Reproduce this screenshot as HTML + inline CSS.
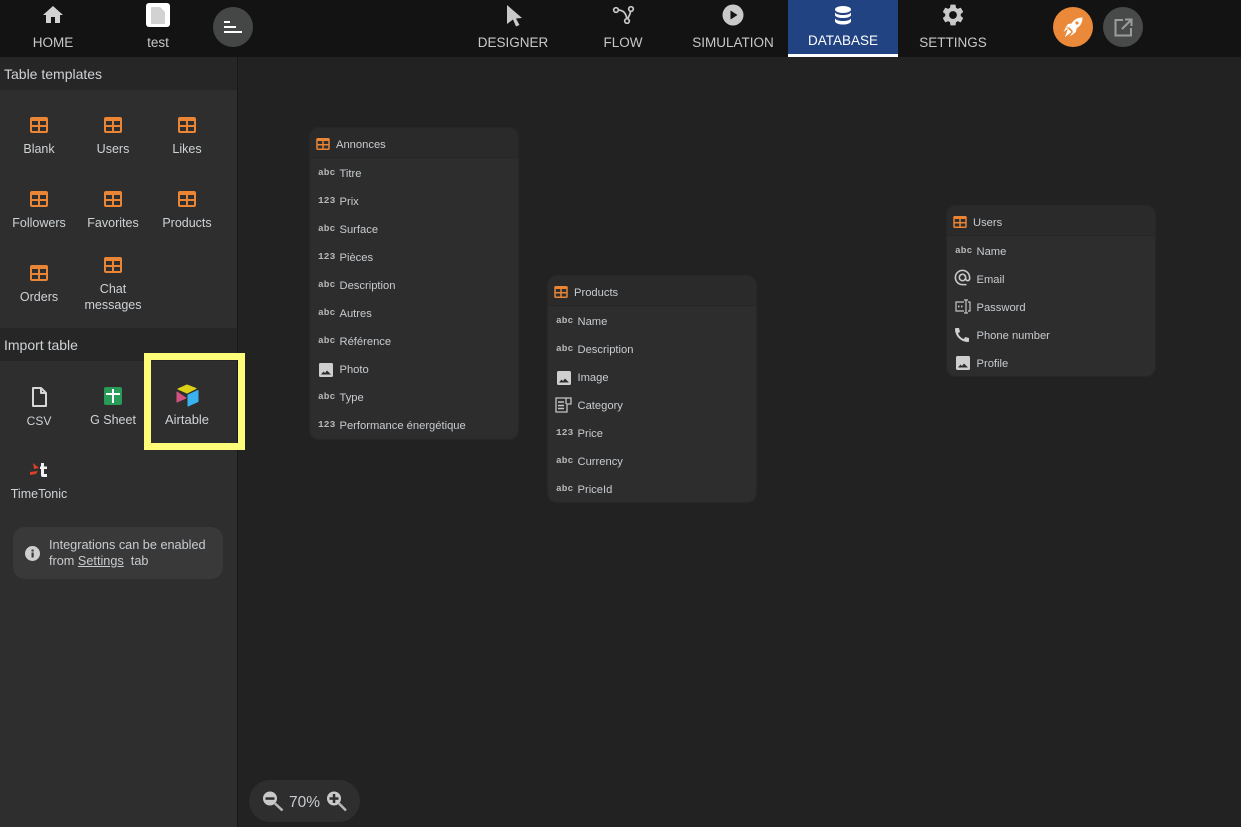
<!DOCTYPE html>
<html><head><meta charset="utf-8">
<style>
html,body{margin:0;padding:0;width:1241px;height:827px;overflow:hidden;background:#222;font-family:"Liberation Sans",sans-serif;color:#d0d0d0}
div,span,svg{position:absolute;box-sizing:border-box}
a,u{position:static}
.t{white-space:nowrap;text-align:center;transform:translateX(-50%);line-height:16px}
.nav{font-size:13.5px;color:#c8c8c8;top:35px}
.lab{font-size:12.5px;color:#cfd3d6}
.hd{left:0;width:237px;background:#262626;font-size:14px;color:#cfd3d6;padding-left:4px}
.tb{background:#2d2d2d;border-radius:10px;width:210px}
.tb:after{content:"";position:absolute;left:0;top:0;right:0;bottom:0;border:1px solid #272727;border-radius:10px}
.th{left:0;top:0;width:100%;height:31px;background:#2a2a2a;border-bottom:1px solid #252525;border-radius:10px 10px 0 0}
.tn{left:27px;top:11px;font-size:11.2px;line-height:14px;color:#c8ccd0;white-space:nowrap}
.rn{left:30.5px;font-size:11.2px;line-height:14px;color:#c8ccd0;white-space:nowrap;margin-top:1px}
.ic{left:9px;width:17px;font-family:"Liberation Mono",monospace;font-size:9.5px;font-weight:bold;line-height:14px;color:#b8b8b8;letter-spacing:.1px;white-space:nowrap;margin-top:0}
</style></head><body>
<svg width="0" height="0" style="left:0;top:0"><defs>
<symbol id="tbl" viewBox="0 0 18 16"><rect width="18" height="16" rx="2" fill="#e98535"/><rect x="2" y="4" width="6" height="4" fill="#2e2e2e"/><rect x="10" y="4" width="6" height="4" fill="#2e2e2e"/><rect x="2" y="10" width="6" height="4" fill="#2e2e2e"/><rect x="10" y="10" width="6" height="4" fill="#2e2e2e"/></symbol>
<symbol id="img" viewBox="0 0 14 14"><rect width="14" height="14" rx="1.5" fill="#cfcfcf"/><path d="M2 11.500l2.500-3 1.500 1.500L8 7.500l4 4z" fill="#2d2d2d"/></symbol>
</defs></svg>

<!-- top bar -->
<div style="left:0;top:0;width:1241px;height:57px;background:#131313"></div>
<svg style="left:41px;top:3px" width="24" height="24" viewBox="0 0 24 24"><path d="M10 20v-6h4v6h5v-8h3L12 3 2 12h3v8z" fill="#d2d2d2"/></svg>
<div class="t nav" style="left:53px">HOME</div>
<div style="left:146px;top:3px;width:24px;height:24px;background:#fff;border-radius:3px"></div>
<svg style="left:151px;top:7px" width="14" height="17" viewBox="0 0 14 17"><path d="M1 0h8l5 5v11a1 1 0 0 1-1 1H1a1 1 0 0 1-1-1V1a1 1 0 0 1 1-1z" fill="#d2d2d2"/></svg>
<div class="t nav" style="left:158px">test</div>
<div style="left:213px;top:7px;width:40px;height:40px;border-radius:50%;background:#454746"></div>
<svg style="left:224px;top:21px" width="18" height="12"><rect width="6" height="2" fill="#fff"/><rect y="5" width="12" height="2" fill="#fff"/><rect y="10" width="18" height="2" fill="#fff"/></svg>

<div style="left:788px;top:0;width:110px;height:57px;background:#224382;border-bottom:3px solid #fff"></div>
<svg style="left:505px;top:4px" width="18" height="23" viewBox="0 0 18 23"><path d="M2 1l15 13-6 .5 3.500 6.500-3.500 1.500-3-7-6 4.500z" fill="#c9c9c9"/></svg>
<div class="t nav" style="left:513px">DESIGNER</div>
<svg style="left:612px;top:4px" width="24" height="20" viewBox="0 0 24 20" fill="none" stroke="#c9c9c9" stroke-width="1.700"><circle cx="4" cy="6" r="2.300"/><circle cx="19" cy="5" r="2.300"/><circle cx="15" cy="17" r="2.300"/><path d="M6.300 6c5 .5 7.500 2.500 8.500 8.700M18.500 7.300c-.2 3-1.500 5-3 7.500"/></svg>
<div class="t nav" style="left:623px">FLOW</div>
<svg style="left:722px;top:4px" width="22" height="22" viewBox="0 0 22 22"><circle cx="11" cy="11" r="10.500" fill="#c9c9c9"/><path d="M8.500 6.500l7 4.500-7 4.500z" fill="#131313"/></svg>
<div class="t nav" style="left:733px">SIMULATION</div>
<svg style="left:834px;top:6px" width="18" height="19" viewBox="0 0 18 19" fill="#fff"><ellipse cx="9" cy="3.500" rx="8" ry="3.500"/><path d="M1 6.500c1 1.500 4 2.500 8 2.500s7-1 8-2.500v3c-1 1.500-4 2.500-8 2.500s-7-1-8-2.500z"/><path d="M1 12.500c1 1.500 4 2.500 8 2.500s7-1 8-2.500v3c-1 2-4 3-8 3s-7-1-8-3z"/></svg>
<div class="t nav" style="left:843px;top:33px;color:#fff">DATABASE</div>
<svg style="left:940px;top:2px" width="26" height="26" viewBox="0 0 24 24"><path fill="#c9c9c9" d="M19.140 12.940c.04-.3.06-.61.06-.94 0-.32-.02-.64-.07-.94l2.030-1.580c.18-.14.23-.41.12-.61l-1.920-3.320c-.12-.22-.37-.29-.59-.22l-2.390.96c-.5-.38-1.030-.7-1.620-.94l-.36-2.540c-.04-.24-.24-.41-.48-.41h-3.840c-.24 0-.43.17-.47.41l-.36 2.540c-.59.24-1.130.57-1.620.94l-2.390-.96c-.22-.08-.47 0-.59.22L2.740 8.870c-.12.21-.08.47.12.61l2.030 1.580c-.05.3-.09.63-.09.94s.02.64.07.94l-2.030 1.580c-.18.14-.23.41-.12.61l1.920 3.320c.12.22.37.29.59.22l2.390-.96c.5.38 1.030.7 1.620.94l.36 2.540c.05.24.24.41.48.41h3.840c.24 0 .44-.17.47-.41l.36-2.540c.59-.24 1.130-.56 1.620-.94l2.390.96c.22.08.47 0 .59-.22l1.920-3.320c.12-.22.07-.47-.12-.61l-2.010-1.580zM12 15.600c-1.980 0-3.600-1.620-3.600-3.600s1.620-3.600 3.600-3.600 3.600 1.620 3.600 3.600-1.620 3.600-3.600 3.600z"/></svg>
<div class="t nav" style="left:953px">SETTINGS</div>
<div style="left:1053px;top:7px;width:40px;height:40px;border-radius:50%;background:#e98939"></div>
<svg style="left:1063px;top:17px" width="20" height="20" viewBox="0 0 20 20" fill="#fff"><path d="M19.500.5c-5 0-8.500 2-11 6l-3.500.5-2 3 3.500.5 3 3 .5 3.500 3-2 .5-3.500c4-2.500 6-6 6-11z"/><circle cx="14" cy="6" r="1.600" fill="#e98939"/><path d="M5 11.500l3.500 3.500-6.500 5zM3 10l2 1.500L.5 15zM9.500 15.500l1 1.500-4 2.500z"/></svg>
<div style="left:1103px;top:7px;width:40px;height:40px;border-radius:50%;background:#484a49"></div>
<svg style="left:1114px;top:18px" width="19" height="19" viewBox="0 0 19 19" fill="none" stroke="#9c9c9c" stroke-width="2"><path d="M9 2H1.500v15.500H17V10M11 1.500h6.500V8M17 2L8 11"/></svg>

<!-- sidebar -->
<div style="left:0;top:57px;width:237px;height:770px;background:#2e2e2e"></div>
<div style="left:237px;top:57px;width:1px;height:770px;background:#171717"></div>
<div class="hd" style="top:57px;height:33px;line-height:35px">Table templates</div>
<div class="hd" style="top:328px;height:33px;line-height:35px">Import table</div>

<svg style="left:30px;top:117px" width="18" height="16"><use href="#tbl"/></svg><div class="t lab" style="left:39px;top:141px">Blank</div>
<svg style="left:104px;top:117px" width="18" height="16"><use href="#tbl"/></svg><div class="t lab" style="left:113px;top:141px">Users</div>
<svg style="left:178px;top:117px" width="18" height="16"><use href="#tbl"/></svg><div class="t lab" style="left:187px;top:141px">Likes</div>
<svg style="left:30px;top:191px" width="18" height="16"><use href="#tbl"/></svg><div class="t lab" style="left:39px;top:215px">Followers</div>
<svg style="left:104px;top:191px" width="18" height="16"><use href="#tbl"/></svg><div class="t lab" style="left:113px;top:215px">Favorites</div>
<svg style="left:178px;top:191px" width="18" height="16"><use href="#tbl"/></svg><div class="t lab" style="left:187px;top:215px">Products</div>
<svg style="left:30px;top:265px" width="18" height="16"><use href="#tbl"/></svg><div class="t lab" style="left:39px;top:289px">Orders</div>
<svg style="left:104px;top:257px" width="18" height="16"><use href="#tbl"/></svg><div class="t lab" style="left:113px;top:281px">Chat<br>messages</div>

<svg style="left:31px;top:387px" width="16" height="20" viewBox="0 0 16 20" fill="none" stroke="#d6d6d6" stroke-width="2" stroke-linejoin="round"><path d="M2 1h8l5 5v13H2zM10 1v5h5"/></svg>
<div class="t lab" style="left:39px;top:413px;font-size:12px">CSV</div>
<div style="left:104px;top:387px;width:18px;height:18px;background:#2a9a58;border-radius:2px"></div>
<svg style="left:104px;top:387px" width="18" height="18"><rect x="2" y="6" width="14" height="2" fill="#fff"/><rect x="8" y="2" width="2" height="14" fill="#fff"/></svg>
<div class="t lab" style="left:113px;top:412px">G Sheet</div>
<div style="left:144px;top:353px;width:101px;height:97px;border:7px solid #fdfd79"></div>
<svg style="left:176px;top:384px" width="24" height="24" viewBox="0 0 24 24" stroke-linejoin="round"><path d="M11 1l9 3.500-9 4.500-9-4z" fill="#dcd318" stroke="#dcd318"/><path d="M12 11l10-4.500v11L12 22z" fill="#39b2f2" stroke="#39b2f2"/><path d="M1 8l9 6-9 4z" fill="#d2527f" stroke="#d2527f"/></svg>
<div class="t lab" style="left:187px;top:412px;font-size:13px">Airtable</div>
<svg style="left:29px;top:462px" width="20" height="16" viewBox="0 0 20 16"><path d="M4 1l6 5-5 1zM1 10l8-1-2 3-6 1z" fill="#d9402b"/><path d="M12 1h3v3.500h3V7h-3v5h3v3h-4a2 2 0 0 1-2-2V7h-1V4.500h1z" fill="#f2f2f2"/></svg>
<div class="t lab" style="left:39px;top:486px">TimeTonic</div>

<div style="left:13px;top:527px;width:210px;height:52px;border-radius:12px;background:#393939"></div>
<svg style="left:25px;top:546px" width="15" height="15"><circle cx="7.500" cy="7.500" r="7.500" fill="#cfcfcf"/><rect x="6.500" y="6.500" width="2.200" height="5" fill="#393939"/><rect x="6.500" y="3.500" width="2.200" height="2" fill="#393939"/></svg>
<div style="left:49px;top:537px;font-size:12.7px;line-height:16px;color:#c8ccd0;white-space:nowrap">Integrations can be enabled<br>from <u>Settings</u>&nbsp; tab</div>

<!-- Annonces -->
<div class="tb" style="left:309px;top:127px;height:313px"><div class="th"></div>
<svg style="left:7px;top:11px" width="14" height="12"><use href="#tbl"/></svg><div class="tn">Annonces</div>
<div class="ic" style="top:39px">abc</div><div class="rn" style="top:39px">Titre</div>
<div class="ic" style="top:67px">123</div><div class="rn" style="top:67px">Prix</div>
<div class="ic" style="top:95px">abc</div><div class="rn" style="top:95px">Surface</div>
<div class="ic" style="top:123px">123</div><div class="rn" style="top:123px">Pièces</div>
<div class="ic" style="top:151px">abc</div><div class="rn" style="top:151px">Description</div>
<div class="ic" style="top:179px">abc</div><div class="rn" style="top:179px">Autres</div>
<div class="ic" style="top:207px">abc</div><div class="rn" style="top:207px">Référence</div>
<svg style="left:10px;top:236px" width="14" height="14"><use href="#img"/></svg><div class="rn" style="top:235px">Photo</div>
<div class="ic" style="top:263px">abc</div><div class="rn" style="top:263px">Type</div>
<div class="ic" style="top:291px">123</div><div class="rn" style="top:291px">Performance énergétique</div>
</div>

<!-- Products -->
<div class="tb" style="left:547px;top:275px;height:228px"><div class="th"></div>
<svg style="left:7px;top:11px" width="14" height="12"><use href="#tbl"/></svg><div class="tn">Products</div>
<div class="ic" style="top:39px">abc</div><div class="rn" style="top:39px">Name</div>
<div class="ic" style="top:67px">abc</div><div class="rn" style="top:67px">Description</div>
<svg style="left:10px;top:96px" width="14" height="14"><use href="#img"/></svg><div class="rn" style="top:95px">Image</div>
<svg style="left:8px;top:122px" width="17" height="16" viewBox="0 0 17 16" fill="none" stroke="#c4c4c4" stroke-width="1.300"><path d="M11 1H1v14h11V7h4V1h-5v6"/><path d="M3 5h6M3 8.500h6M3 11.500h6" stroke-width="1.500"/></svg><div class="rn" style="top:123px">Category</div>
<div class="ic" style="top:151px">123</div><div class="rn" style="top:151px">Price</div>
<div class="ic" style="top:179px">abc</div><div class="rn" style="top:179px">Currency</div>
<div class="ic" style="top:207px">abc</div><div class="rn" style="top:207px">PriceId</div>
</div>

<!-- Users -->
<div class="tb" style="left:946px;top:205px;height:172px"><div class="th"></div>
<svg style="left:7px;top:11px" width="14" height="12"><use href="#tbl"/></svg><div class="tn">Users</div>
<div class="ic" style="top:39px">abc</div><div class="rn" style="top:39px">Name</div>
<svg style="left:7.400px;top:63.400px" width="19" height="19" viewBox="0 0 24 24"><path fill="#c9c9c9" d="M12 2C6.480 2 2 6.480 2 12s4.480 10 10 10h5v-2h-5c-4.340 0-8-3.660-8-8s3.660-8 8-8 8 3.660 8 8v1.430c0 .79-.71 1.570-1.500 1.570s-1.500-.78-1.500-1.570V12c0-2.760-2.240-5-5-5s-5 2.240-5 5 2.240 5 5 5c1.380 0 2.640-.56 3.540-1.470.65.89 1.770 1.470 2.960 1.470 1.970 0 3.500-1.600 3.500-3.570V12c0-5.520-4.480-10-10-10zm0 13c-1.660 0-3-1.340-3-3s1.340-3 3-3 3 1.340 3 3-1.340 3-3 3z"/></svg><div class="rn" style="top:67px">Email</div>
<svg style="left:9px;top:94px" width="16" height="16" viewBox="0 0 16 16" fill="none" stroke="#c4c4c4" stroke-width="1.200"><path d="M9 3H1v9h8M13 3h2v9h-2M9 1h4M9 14h4M11 1v13"/><path d="M3 7.500h1.500M6 7.500h1.500" stroke-width="1.800"/></svg><div class="rn" style="top:95px">Password</div>
<svg style="left:9px;top:122px" width="15" height="15" viewBox="0 0 15 15"><path d="M1 1h3l1 4-2 1c1 3 3 5 6 6l1-2 4 1v3c0 1-1 1-1 1C6 15 0 9 0 2c0 0 0-1 1-1z" fill="#cfcfcf"/></svg><div class="rn" style="top:123px">Phone number</div>
<svg style="left:10px;top:151px" width="14" height="14"><use href="#img"/></svg><div class="rn" style="top:151px">Profile</div>
</div>

<!-- zoom -->
<div style="left:249px;top:780px;width:111px;height:42px;border-radius:21px;background:#2e2e2e"></div>
<svg style="left:262px;top:791px" width="22" height="21" viewBox="0 0 22 21"><circle cx="8" cy="7.500" r="7" fill="#c9c9c9"/><rect x="3.500" y="6.300" width="9" height="2.500" fill="#2e2e2e"/><path d="M13 12.500l7.500 7" stroke="#b8b8b8" stroke-width="2.500"/></svg>
<div style="left:289px;top:794px;font-size:15.500px;line-height:17px;color:#c8ccd0">70%</div>
<svg style="left:326px;top:791px" width="22" height="21" viewBox="0 0 22 21"><circle cx="8" cy="7.500" r="7" fill="#c9c9c9"/><rect x="3.500" y="6.300" width="9" height="2.500" fill="#2e2e2e"/><rect x="6.800" y="3" width="2.500" height="9" fill="#2e2e2e"/><path d="M13 12.500l7 7" stroke="#b8b8b8" stroke-width="2.500"/></svg>
</body></html>
